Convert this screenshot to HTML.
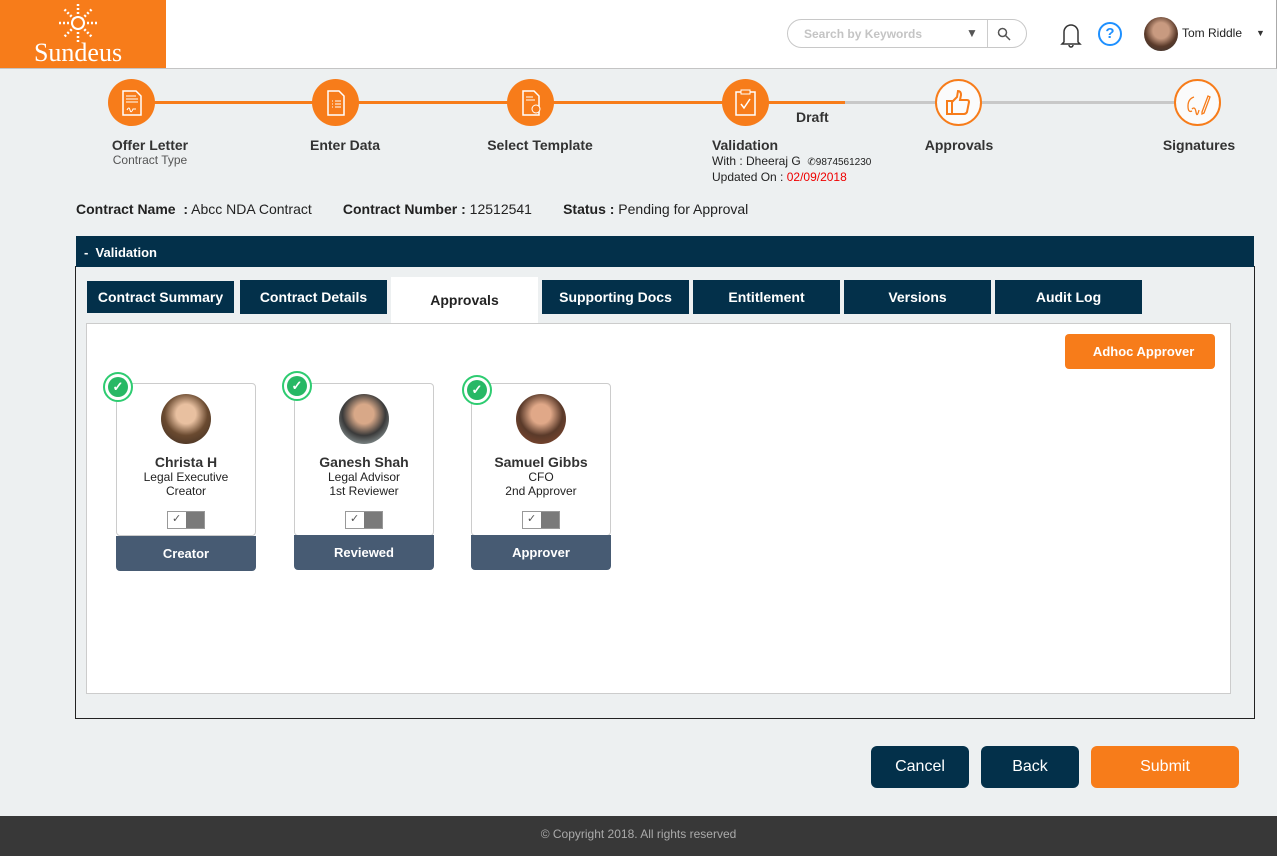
<!DOCTYPE html><html><head><style>
*{box-sizing:border-box;margin:0;padding:0}
body{width:1277px;height:856px;background:#edf0f1;font-family:"Liberation Sans",sans-serif;position:relative;overflow:hidden;color:#333}
.a{position:absolute}
.hdr{left:0;top:0;width:1277px;height:69px;background:#fff;border-bottom:1px solid #c4c4c4;border-right:1px solid #aaa}
.logo{left:0;top:0;width:166px;height:68px;background:#f77c1a;color:#fff;font-family:"Liberation Serif",serif;font-size:25px;text-align:center}
.circ{width:47px;height:47px;border-radius:50%;background:#f77c1a;top:79px}
.circo{background:#fbfbfb;border:2px solid #f77c1a}
.lbl{font-weight:bold;font-size:14px;color:#333;text-align:center;top:137px;width:160px}
.tab{top:280px;height:34px;background:#03304a;color:#fff;font-weight:bold;font-size:14px;text-align:center;line-height:34px}
.card{width:140px;height:153px;background:#fff;border:1px solid #ccc;border-radius:4px;top:383px;text-align:center}
.av{width:50px;height:50px;border-radius:50%;margin:10px auto 0}
.nm{font-weight:bold;font-size:14px;margin-top:10px;color:#333}
.sm{font-size:12px;line-height:14px;color:#222}
.tg{width:38px;height:18px;border:1px solid #999;margin:0 auto;position:absolute;left:50px;top:127px;background:#fff}
.tg::after{content:"";position:absolute;right:0;top:0;width:18px;height:16px;background:#7a7a7a}
.tg span{position:absolute;left:4px;top:0;font-size:11px;color:#555}
.cb{width:140px;height:35px;background:#475b73;color:#fff;font-weight:bold;font-size:13px;text-align:center;line-height:35px;border-radius:0 0 4px 4px;top:536px}
.chk{width:30px;height:30px;border-radius:50%;border:2px solid #2ecc71;background:#fff;top:372px}
.chk::after{content:"✓";position:absolute;left:3px;top:3px;width:20px;height:20px;border-radius:50%;background:#27b865;color:#fff;font-size:13px;font-weight:bold;text-align:center;line-height:20px}
.btn{top:746px;height:42px;border-radius:6px;color:#fff;font-size:16px;text-align:center;line-height:42px}
</style></head><body>
<div class="a hdr"></div>
<div class="a logo"><svg class="a" style="left:58px;top:3px" width="40" height="40"><g stroke="#fff" stroke-width="2.5" stroke-dasharray="2 2"><path d="M20 1v38M1 20h38M6.5 6.5l27 27M33.5 6.5l-27 27"/></g><circle cx="20" cy="20" r="6" fill="#f77c1a" stroke="#fff" stroke-width="2"/></svg><div class="a" style="left:0;top:38px;width:156px;font-size:26px;line-height:30px">Sundeus</div></div>
<div class="a" style="left:787px;top:19px;width:240px;height:29px;border:1px solid #c8c8c8;border-radius:15px;background:#fff"><span class="a" style="left:16px;top:7px;font-size:12px;color:#c4c4c4;font-weight:bold">Search by Keywords</span><span class="a" style="left:178px;top:6px;font-size:12px;color:#555">▼</span><div class="a" style="left:199px;top:0;width:1px;height:27px;background:#ccc"></div><svg class="a" style="left:209px;top:7px" width="14" height="14"><circle cx="5.5" cy="5.5" r="4" stroke="#555" stroke-width="1.5" fill="none"/><path d="M8.5 8.5L13 13" stroke="#555" stroke-width="1.5"/></svg></div>
<svg class="a" style="left:1059px;top:20px" width="24" height="30"><path d="M5 22V12a7 7 0 0 1 14 0v10l2 2H3z" fill="none" stroke="#333" stroke-width="1.5"/><path d="M10 25a2 2 0 0 0 4 0" stroke="#333" fill="none" stroke-width="1.5"/></svg>
<div class="a" style="left:1098px;top:22px;width:24px;height:24px;border:2px solid #1e90ff;border-radius:50%;color:#1e90ff;font-size:15px;text-align:center;line-height:20px;font-weight:bold">?</div>
<div class="a" style="left:1144px;top:17px;width:34px;height:34px;border-radius:50%;background:radial-gradient(circle at 50% 40%,#c89a80 30%,#5a3a2a 60%,#333 100%)"></div>
<span class="a" style="left:1182px;top:26px;font-size:12px;color:#222">Tom Riddle</span><span class="a" style="left:1256px;top:28px;font-size:9px;color:#333">▼</span>
<div class="a" style="left:131px;top:101px;width:714px;height:3px;background:#f77c1a"></div>
<div class="a" style="left:845px;top:101px;width:352px;height:3px;background:#c8c8c8"></div>
<div class="a circ" style="left:108px"><svg width="47" height="47"><path d="M15 12h13l5 5v19H15z" fill="none" stroke="#fff" stroke-width="1.5"/><path d="M18 17h10M18 20h12M18 23h12" stroke="#fff"/><path d="M19 31q2-4 3 0t3-1h3" stroke="#fff" fill="none"/></svg></div>
<div class="a circ" style="left:312px"><svg width="47" height="47"><path d="M16 12h11l5 5v19H16z" fill="none" stroke="#fff" stroke-width="1.5"/><path d="M20 22h1M23 22h6M20 25h1M23 25h6M20 28h1M23 28h6" stroke="#fff"/></svg></div>
<div class="a circ" style="left:507px"><svg width="47" height="47"><path d="M16 12h11l5 5v19H16z" fill="none" stroke="#fff" stroke-width="1.5"/><path d="M19 18h7M19 21h9" stroke="#fff"/><circle cx="29" cy="30" r="4" fill="#f77c1a" stroke="#fff"/></svg></div>
<div class="a circ" style="left:722px"><svg width="47" height="47"><rect x="14" y="13" width="19" height="23" fill="none" stroke="#fff" stroke-width="1.5"/><rect x="19" y="11" width="9" height="4" fill="#f77c1a" stroke="#fff"/><path d="M19 25l3 4 6-9" stroke="#fff" fill="none" stroke-width="1.5"/></svg></div>
<div class="a circ circo" style="left:935px"><svg width="43" height="43"><path d="M10 20h5v13h-5zM15 21l5-5 1-6q3 0 3 4l-1 5h7q2 0 2 2l-2 10q-1 2-3 2H15" fill="none" stroke="#f77c1a" stroke-width="2"/></svg></div>
<div class="a circ circo" style="left:1174px"><svg width="43" height="43"><path d="M18 16q-6 2-6 9t4 5M16 28q3-3 4 3t3-2M26 31l6-16 2 1-6 16-2 1z" fill="none" stroke="#f77c1a" stroke-width="1.3"/></svg></div>
<div class="a lbl" style="left:70px">Offer Letter</div><div class="a" style="left:70px;top:153px;width:160px;text-align:center;font-size:12px;color:#555">Contract Type</div>
<div class="a lbl" style="left:265px">Enter Data</div>
<div class="a lbl" style="left:460px">Select Template</div>
<div class="a lbl" style="left:665px">Validation</div>
<div class="a" style="left:796px;top:109px;font-weight:bold;font-size:14px">Draft</div>
<div class="a" style="left:712px;top:154px;font-size:12px;line-height:15px;color:#222">With : Dheeraj G &nbsp;<span style="font-size:10px">✆9874561230</span><br>Updated On : <span style="color:#e00">02/09/2018</span></div>
<div class="a lbl" style="left:879px">Approvals</div>
<div class="a lbl" style="left:1119px">Signatures</div>
<div class="a" style="left:76px;top:201px;font-size:14px;color:#222"><b>Contract Name &nbsp;:</b> Abcc NDA Contract &nbsp;&nbsp;&nbsp;&nbsp;&nbsp;&nbsp; <b>Contract Number :</b> 12512541 &nbsp;&nbsp;&nbsp;&nbsp;&nbsp;&nbsp; <b>Status :</b> Pending for Approval</div>
<div class="a" style="left:76px;top:236px;width:1178px;height:31px;background:#03304a;color:#fff;font-weight:bold;font-size:13px;line-height:33px;padding-left:8px">-&nbsp; Validation</div>
<div class="a" style="left:75px;top:266px;width:1180px;height:453px;border:1px solid #222;border-top:none"></div>
<div class="a tab" style="left:87px;top:281px;width:147px;height:32px;line-height:32px">Contract Summary</div>
<div class="a tab" style="left:240px;width:147px">Contract Details</div>
<div class="a" style="left:391px;top:277px;width:147px;height:46px;background:#fff;font-weight:bold;font-size:14px;text-align:center;line-height:46px;color:#222">Approvals</div>
<div class="a tab" style="left:542px;width:147px">Supporting Docs</div>
<div class="a tab" style="left:693px;width:147px">Entitlement</div>
<div class="a tab" style="left:844px;width:147px">Versions</div>
<div class="a tab" style="left:995px;width:147px">Audit Log</div>
<div class="a" style="left:86px;top:323px;width:1145px;height:371px;background:#fff;border:1px solid #ccc"></div>
<div class="a" style="left:1065px;top:334px;width:150px;height:35px;background:#f77c1a;border-radius:4px;color:#fff;font-weight:bold;font-size:13px;text-align:center;line-height:35px">&nbsp;&nbsp;Adhoc Approver</div>
<div class="a card" style="left:116px"><div class="av" style="background:radial-gradient(circle at 50% 40%,#e8c0a0 25%,#6a4a30 55%,#3a2a20 100%)"></div><div class="nm">Christa H</div><div class="sm">Legal Executive<br>Creator</div><div class="tg"><span>✓</span></div></div>
<div class="a card" style="left:294px"><div class="av" style="background:radial-gradient(circle at 50% 40%,#d8a888 25%,#3a3a3a 55%,#bcc 100%)"></div><div class="nm">Ganesh Shah</div><div class="sm">Legal Advisor<br>1st Reviewer</div><div class="tg"><span>✓</span></div></div>
<div class="a card" style="left:471px"><div class="av" style="background:radial-gradient(circle at 50% 40%,#e0a888 25%,#5a3a2a 55%,#8a4a30 100%)"></div><div class="nm">Samuel Gibbs</div><div class="sm">CFO<br>2nd Approver</div><div class="tg"><span>✓</span></div></div>
<div class="a cb" style="left:116px">Creator</div><div class="a cb" style="left:294px;top:535px">Reviewed</div><div class="a cb" style="left:471px;top:535px">Approver</div>
<div class="a chk" style="left:103px"></div><div class="a chk" style="left:282px;top:371px"></div><div class="a chk" style="left:462px;top:375px"></div>
<div class="a btn" style="left:871px;width:98px;background:#03304a">Cancel</div>
<div class="a btn" style="left:981px;width:98px;background:#03304a">Back</div>
<div class="a btn" style="left:1091px;width:148px;background:#f77c1a">Submit</div>
<div class="a" style="left:0;top:816px;width:1277px;height:40px;background:#383838;color:#aaa;font-size:12px;text-align:center;line-height:36px">© Copyright 2018. All rights reserved</div>
</body></html>
